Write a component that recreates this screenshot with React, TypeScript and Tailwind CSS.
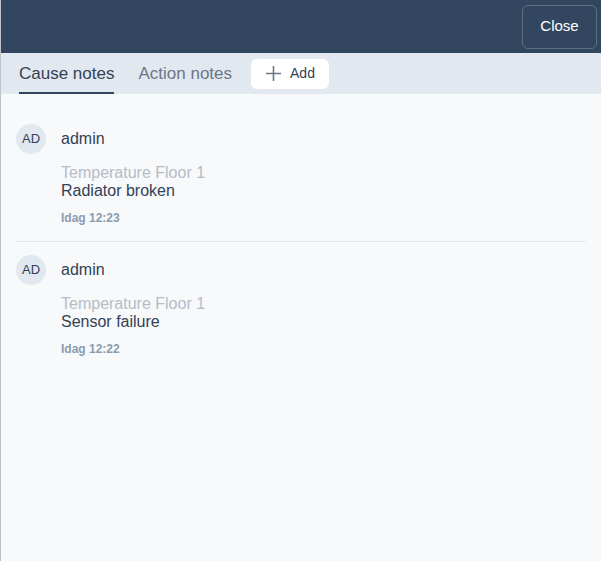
const notes = [
  { user: "admin", initials: "AD", point: "Temperature Floor 1", text: "Radiator broken", time: "Idag 12:23" },
  { user: "admin", initials: "AD", point: "Temperature Floor 1", text: "Sensor failure", time: "Idag 12:22" },
];

const App = () => {
  return (
    <div
      className="w-[601px] h-[561px] flex flex-col border-l border-[#bfc3c7] bg-[#f7f9fb] overflow-hidden"
      style={{ fontFamily: '"Liberation Sans", Arial, sans-serif' }}
    >
      {/* header */}
      <div className="h-[53px] bg-[#32475f] flex items-center justify-end pr-[4px]">
        <button className="w-[75px] h-[44px] rounded-[6px] border border-[#5b6f87] text-white text-[15px]">
          Close
        </button>
      </div>

      {/* tabs */}
      <div className="h-[41px] bg-[#e2e8f0] flex items-stretch pl-[18px]">
        <div className="relative flex items-center text-[17px] text-[#334155]">
          Cause notes
          <div className="absolute left-0 right-0 bottom-0 h-[2px] bg-[#32475f]"></div>
        </div>
        <div className="flex items-center ml-[24px] text-[17px] text-[#6b7787]">Action notes</div>
        <div className="flex items-center ml-[19px]">
          <button className="h-[30px] w-[78px] bg-white rounded-[6px] flex items-center pl-[15px] gap-[9px] text-[14px] text-[#334155]">
            <svg width="15" height="15" viewBox="0 0 15 15" fill="none" stroke="#6b7787" strokeWidth="1.6">
              <path d="M7.5 0v15M0 7.5h15" />
            </svg>
            Add
          </button>
        </div>
      </div>

      {/* notes */}
      <div className="px-[15px] pt-4">
        {notes.map((n, i) => (
          <div
            key={i}
            className={
              "flex gap-[15px] " + (i > 0 ? "pt-[13px] pb-4" : "pt-[14px] pb-[15px] border-b border-[#e3e8ee]")
            }
          >
            <div className="w-[30px] h-[30px] shrink-0 rounded-full bg-[#e2e8f0] flex items-center justify-center text-[13px] text-[#334155]">
              {n.initials}
            </div>
            <div className="flex flex-col">
              <div className="h-[30px] flex items-center text-[16px] text-[#334155]">{n.user}</div>
              <div className="mt-[10px] text-[16px] leading-[18px] text-[#b5bcc6]">{n.point}</div>
              <div className="text-[16px] leading-[18px] text-[#334155]">{n.text}</div>
              <div className="mt-[10px] text-[12px] leading-[16px] font-bold text-[#8b9bb0]">{n.time}</div>
            </div>
          </div>
        ))}
      </div>
    </div>
  );
};

export default App;
